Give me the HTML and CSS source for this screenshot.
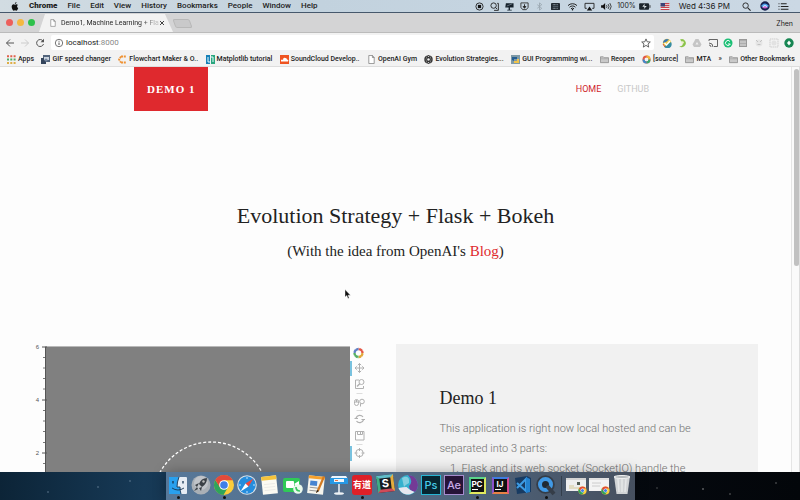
FILE: index.html
```html
<!DOCTYPE html>
<html lang="en">
<head>
<meta charset="utf-8">
<title>Demo1, Machine Learning + Flask</title>
<link rel="stylesheet" href="styles.css">
</head>
<body>
<svg class="defs" aria-hidden="true">
  <defs>
    <symbol id="chrome" viewBox="0 0 22 22">
      <circle cx="11" cy="11" r="10" fill="#fbcd3b"/>
      <path d="M11 11 2.3 6A10 10 0 0 1 19.7 6.3H11z" fill="#e24a3b"/>
      <path d="M2.3 6A10 10 0 0 0 10.5 21L15 13.3 11 11 7 13z" fill="#2fa55a"/>
      <path d="M2.3 6 7 13.5 11 11V6.3z" fill="#e24a3b"/>
      <circle cx="11" cy="11" r="4.8" fill="#fff"/><circle cx="11" cy="11" r="3.8" fill="#3f7fe8"/>
    </symbol>
    <symbol id="page" viewBox="0 0 8 10"><path d="M1 .5h4l2 2.2v6.8H1zM5 .5v2.3h2" fill="#fff" stroke="#777" stroke-width=".8"/></symbol>
    <symbol id="folder" viewBox="0 0 10 9"><path d="M.5 8V1.5h3.2l1 1h4.8V8z" fill="#c9c9c9" stroke="#858585" stroke-width=".8"/><path d="M.8 3.7h8.4" stroke="#999" stroke-width=".6"/></symbol>
  </defs>
</svg>

<header class="menubar">
  <nav class="menus">
    <svg class="apple" viewBox="0 0 8 10"><path d="M5.6 0C5.7 1 5 2 3.9 2.1 3.8 1.1 4.6.2 5.6 0zM7.2 3.2C5.8 4 6 6 7.6 6.6 7 8.300 6.200 9.600 5.500 9.600 4.900 9.600 4.700 9.200 4 9.200S3 9.600 2.500 9.600C1.600 9.600.3 7.300.3 5.400.3 3.600 1.300 2.600 2.400 2.600 3.100 2.600 3.600 3 4 3S5 2.500 5.800 2.500C6.400 2.500 6.900 2.800 7.200 3.200z" fill="#111"/></svg>
    <b>Chrome</b><span>File</span><span>Edit</span><span>View</span><span>History</span><span>Bookmarks</span><span>People</span><span>Window</span><span>Help</span>
  </nav>
  <div class="status">
    <svg class="st" viewBox="0 0 10 10"><circle cx="5" cy="5" r="4" fill="none" stroke="#222"/><rect x="3.200" y="3.200" width="3.600" height="3.600" fill="#111"/></svg>
    <svg class="st" viewBox="0 0 10 10"><g fill="none" stroke="#222"><circle cx="4" cy="4" r="3"/><path d="M6 6l2 2M8 1.500h1.300v7.800H4.500"/></g></svg>
    <svg class="st" viewBox="0 0 10 10"><path d="M1 1.500h8.500V6H.3zM4 6h1.500v2.500H4zM2.500 8.500h5v1h-5z" fill="#15202a"/><path d="M2 4.500 8 2" stroke="#8998a5" stroke-width=".7"/></svg>
    <svg class="st" viewBox="0 0 10 10"><path d="M1 1h8v5L7 8.500H3L1 6z" fill="none" stroke="#333"/><path d="M5 2.500v3M3.500 5h3L5 7z" stroke="#222" fill="#222"/></svg>
    <svg class="st" viewBox="0 0 10 10"><path d="M2.500 3l5 4L5 9V1l2.500 2-5 4" fill="none" stroke="#98a5af" stroke-width=".9"/></svg>
    <svg class="st wide" viewBox="0 0 10 10"><rect y="1" width="10" height="8" rx="1" fill="#222b33"/><path d="M2 3h6M2 7h6" stroke="#9eacb6" stroke-dasharray="1 .5"/><path d="M2 5h6" stroke="#52606b"/></svg>
    <svg class="st wide" viewBox="0 0 12 10"><path d="M1 4a7 7 0 0 1 10 0M2.700 5.800a4.600 4.600 0 0 1 6.600 0M4.300 7.500a2.500 2.500 0 0 1 3.400 0" fill="none" stroke="#222" stroke-width="1.100"/><circle cx="6" cy="8.600" r=".8"/></svg>
    <svg class="st wide" viewBox="0 0 12 10"><path d="M3 7H1V1.500h10V7H9" fill="none" stroke="#222"/><path d="M6 5l3 4.500H3z" fill="#111"/></svg>
    <svg class="st wide" viewBox="0 0 12 10"><path d="M0 3.500h2L4.500 1v8L2 6.500H0z" fill="#111"/><path d="M6 3.500q1 1.500 0 3M7.800 2.300q2 2.700 0 5.400M9.700 1.200q3 3.800 0 7.600" fill="none" stroke="#222" stroke-width=".9"/></svg>
    <span class="percent">100%</span>
    <svg class="battery" viewBox="0 0 14 10"><rect x=".5" y="1.500" width="11" height="7" rx="1" fill="#1b242c"/><path d="M12.500 3.500v3" stroke="#222"/><path d="M6.500 2 4 5.300h2.500L5.500 8 9 4.500H6.500z" fill="#dce4e9"/></svg>
    <svg class="flag" viewBox="0 0 10 8"><path fill="#eee" d="M0 0h10v8H0z"/><path d="M0 .7h10M0 3h10M0 5.200h10M0 7.400h10" stroke="#c9434d" stroke-width="1.200"/><path fill="#3b4477" d="M0 0h5v4H0z"/></svg>
    <span class="clock">Wed 4:36 PM</span>
    <svg class="st" viewBox="0 0 10 10"><path d="M6.500 6.500 9.500 9.500" stroke="#222" stroke-width="1.200"/><circle cx="4" cy="4" r="3" fill="none" stroke="#222"/></svg>
    <svg class="siri" viewBox="0 0 10 10"><circle cx="5" cy="5" r="4.700" fill="#17204d"/><path d="M1 5q4-5 8 0-4 3-8 0" fill="#4f9fec"/><path d="M2 6.500q3-3 6 0-3 2-6 0" fill="#ca63ce"/><path d="M3 5.500q2-2 4 0" stroke="#e5f8ff" fill="none"/></svg>
    <svg class="st" viewBox="0 0 11 10"><path d="M0 2h1M2.500 2H9M0 5h1M2.500 5H11M0 8h1M2.500 8H11" stroke="#222" stroke-width="1.200"/></svg>
  </div>
</header>

<main class="window">
  <div class="tabstrip">
    <div class="lights"><i class="red"></i><i class="yellow"></i><i class="green"></i></div>
    <div class="tab"><svg class="pageicon"><use href="#page"/></svg><span class="tabtitle">Demo1, Machine Learning + Fla</span><button class="close" aria-label="Close tab"><svg viewBox="0 0 6 6"><path d="M1 1l4 4M5 1 1 5" stroke="#444"/></svg></button></div>
    <button class="newtab" aria-label="New tab"></button>
    <span class="user">Zhen</span>
  </div>

  <div class="toolbar">
    <button aria-label="Back"><svg viewBox="0 0 10 10"><path d="M9 5H1.500M5 1.500 1.500 5 5 8.500" fill="none" stroke="#555"/></svg></button>
    <button aria-label="Forward"><svg viewBox="0 0 10 10"><path d="M1 5h7.500M5 1.500 8.500 5 5 8.500" fill="none" stroke="#ccc"/></svg></button>
    <button aria-label="Reload"><svg viewBox="0 0 10 10"><path d="M8 3A3.500 3.500 0 1 0 8.500 6" fill="none" stroke="#555"/><path d="M9 .8V4.300H5.500z" fill="#555"/></svg></button>
    <div class="address">
      <svg viewBox="0 0 10 10"><circle cx="5" cy="5" r="3.700" fill="none" stroke="#666" stroke-width=".9"/><path d="M5 4.500V7M5 2.800v.9" stroke="#555"/></svg>
      <a href="#">localhost<span>:8000</span></a>
      <svg class="star" viewBox="0 0 10 10"><path d="M5 .9 6.200 3.800 9.300 4 7 6 7.700 9.100 5 7.400 2.300 9.100 3 6 .7 4 3.800 3.800z" fill="none" stroke="#555" stroke-width=".9"/></svg>
    </div>
    <div class="extensions">
      <svg viewBox="0 0 10 10"><circle cx="5" cy="5" r="4.200" fill="#efce4a"/><path d="M1 5a4 4 0 0 1 6-3.500L4 4z" fill="#3a78b5"/><path d="M2 8.500A4 4 0 0 0 9 4L6 6z" fill="#368da3"/><path d="M2.500 5 4.500 7 8 3" fill="none" stroke="#fff" stroke-width="1.300"/><path d="M1 6l2 3" stroke="#d65840"/></svg>
      <svg viewBox="0 0 10 10"><path d="M3 1.500a4 4 0 1 1-1 6.500c3 1 5-2 3-4z" fill="#8bc34a"/><circle cx="5.500" cy="4.500" r="1.300" fill="#f0f0d0"/></svg>
      <svg viewBox="0 0 10 10"><path d="M3.500 1h3l3 5.500L8 9H2L.5 6.500z" fill="#c5c5c5"/><path d="M5 4 3.500 6.500h3z" fill="#eee"/></svg>
      <svg viewBox="0 0 10 10"><path d="M1 3V1.500h8.500v7H6M1 5a4 4 0 0 1 4 4M1 7a2 2 0 0 1 2 2" fill="none" stroke="#666"/></svg>
      <svg viewBox="0 0 10 10"><circle cx="5" cy="5" r="4.500" fill="#1bbf75"/><path d="M7 3.500a2.500 2.500 0 1 0 .3 2.500H5" fill="none" stroke="#fff"/></svg>
      <svg viewBox="0 0 10 10"><path d="M1 1h8v8H1z" fill="#999"/><path d="M3 2.500v3M5 2.500v3M7 2.500v3M2 7h6" stroke="#eee"/></svg>
      <svg viewBox="0 0 10 10"><circle cx="5" cy="5" r="3.500" fill="#e5e5e5"/><path d="M2 2l2 2M8 2 6 4M3.500 6.500h3" stroke="#c2c2c2"/></svg>
      <svg viewBox="0 0 10 10"><path d="M1 1h8v8H1z" fill="none" stroke="#cfcfcf" stroke-dasharray="1.500 .5"/><circle cx="5" cy="5" r="2.500" fill="#e2e2e2"/></svg>
      <svg viewBox="0 0 10 10"><circle cx="5" cy="5" r="4.700" fill="#178653"/><path d="M5 2.500 7 5 5 7.500 3 5z" fill="#fff"/></svg>
    </div>
  </div>

  <nav class="bookmarks">
    <a href="#"><svg viewBox="0 0 9 9"><g stroke-width="2" stroke-dasharray="2 1.300"><path d="M0 1.300h9" stroke="#df604b"/><path d="M0 4.600h9" stroke="#4cad67"/><path d="M0 7.900h9" stroke="#dfae45"/></g></svg>Apps</a>
    <a href="#"><svg viewBox="0 0 9 9"><path d="M2 0h7v7H2z" fill="#52647c"/><path d="M0 3h5v6H0z" fill="#34455c"/><path d="M3 2h5v3H3z" fill="#cbd4df"/><circle cx="5" cy="5" r="1.600" fill="#75859d"/></svg>GIF speed changer</a>
    <a href="#"><svg viewBox="0 0 9 9"><path d="M3 1.500 1 4.500l2 3M3 1.500h5M3 7.500h5" fill="none" stroke="#ef9233" stroke-dasharray="2 .8" stroke-width="1.800"/></svg>Flowchart Maker &amp; O..</a>
    <a href="#"><svg viewBox="0 0 9 9"><path fill="#1580b7" d="M0 0h4v9H0z"/><path fill="#29a67e" d="M5 0h4v9H5z"/><path d="M2 2v5h3M7 7V2H5" fill="none" stroke="#e9faff"/></svg>Matplotlib tutorial</a>
    <a href="#"><svg viewBox="0 0 9 9"><path fill="#ef5421" d="M0 0h9v9H0z"/><path d="M1 6.500V5q1-1 2 0 0-3 2.500-2Q7 3 7 4.500q2 0 1 2z" fill="#fff"/></svg>SoundCloud Develop..</a>
    <a href="#"><svg><use href="#page"/></svg>OpenAI Gym</a>
    <a href="#"><svg viewBox="0 0 9 9"><g fill="none" stroke="#222" stroke-width=".8"><circle cx="4.500" cy="4.500" r="3.900"/><ellipse cx="4.500" cy="4.500" rx="1.700" ry="3.800"/><ellipse cx="4.500" cy="4.500" rx="1.700" ry="3.800" transform="rotate(60 4.500 4.500)"/><ellipse cx="4.500" cy="4.500" rx="1.700" ry="3.800" transform="rotate(120 4.500 4.500)"/></g></svg>Evolution Strategies...</a>
    <a href="#"><svg viewBox="0 0 9 9"><path fill="#7e9aa7" d="M0 0h9v9H0z"/><path d="M1 5V2h5v2H3v2z" fill="#265e91"/><path d="M3 8V6h3V4h2v4z" fill="#efc34b"/></svg>GUI Programming wi...</a>
    <a href="#"><svg><use href="#folder"/></svg>Reopen</a>
    <a href="#"><svg viewBox="0 0 9 9"><circle cx="4.500" cy="4.500" r="3" fill="none" stroke="#e15746" stroke-width="2"/><path d="M4.500 1.500a3 3 0 0 1 3 3" fill="none" stroke="#efb83b" stroke-width="2"/><path d="M7.500 4.500a3 3 0 0 1-3 3" fill="none" stroke="#36aa70" stroke-width="2"/><path d="M4.500 7.500a3 3 0 0 1-3-3" fill="none" stroke="#408bcc" stroke-width="2"/></svg>[source]</a>
    <a href="#"><svg><use href="#folder"/></svg>MTA</a>
    <a href="#">»</a>
    <a href="#"><svg><use href="#folder"/></svg>Other Bookmarks</a>
  </nav>

  <div class="viewport">
    <div class="page">
      <header class="siteheader">
        <a class="brand" href="#">DEMO 1</a>
        <nav class="sitenav"><a class="active" href="#">HOME</a><a href="#">GITHUB</a></nav>
      </header>
      <section class="hero">
        <h1>Evolution Strategy + Flask + Bokeh</h1>
        <p>(With the idea from OpenAI's <a href="#">Blog</a>)</p>
      </section>
      <section class="content">
        <div class="figure">
          <svg class="plot" viewBox="0 0 317 160">
            <path d="M12 3h305v157H12z" fill="#808080"/>
            <path d="M12 2.500h305" stroke="#b9b9b9"/>
            <path d="M12.500 3v157" stroke="#555"/>
            <path d="M9 3h5M9 56h5M9 109h5" stroke="#555"/>
            <path d="M10 13.500h3M10 24h3M10 34.500h3M10 45h3M10 66.500h3M10 77h3M10 87.500h3M10 98.500h3M10 119.500h3" stroke="#555" stroke-width=".8"/>
            <circle cx="178" cy="156" r="58" fill="none" stroke="#fff" stroke-width="1.300" stroke-dasharray="3 2"/>
            <g class="ticks"><text x="6" y="5">6</text><text x="6" y="58">4</text><text x="6" y="111">2</text></g>
          </svg>
          <svg class="plottools" viewBox="0 0 18 120">
            <g fill="none" stroke-width="2.400"><path d="M8.500 5a4 4 0 0 1 4 4" stroke="#e45745"/><path d="M12.500 9a4 4 0 0 1-4 4" stroke="#e1a739"/><path d="M8.500 13a4 4 0 0 1-4-4" stroke="#56af65"/><path d="M4.500 9a4 4 0 0 1 4-4" stroke="#5f80c5"/><circle cx="8.500" cy="9" r="5" stroke="#fff" stroke-width=".6" stroke-dasharray="1 2.900"/></g>
            <path d="M0 17h2v15H0zM0 102h2v15H0z" fill="#79c2df"/>
            <g fill="none" stroke="#b0b0b0"><path d="M5 24h9M9.500 19.500v9M7.800 21.200l1.700-1.700 1.700 1.700M7.800 26.800l1.700 1.700 1.700-1.700M6.700 22.300 5 24l1.700 1.700M12.300 22.300 14 24l-1.700 1.700"/>
            <path d="M9 36H5.500v8.500h8V42"/><circle cx="11.500" cy="38" r="2.500"/><path d="M9.700 39.800 7 42.500" stroke-width="1.500"/>
            <rect x="4.500" y="55.500" width="4" height="6" rx="2"/><path d="M4.500 58h4M6.500 56v2"/><circle cx="12" cy="57.500" r="2.300"/><path d="M10.500 59.500v3"/>
            <path d="M6 74a4 4 0 0 1 7-1M13.500 76a4 4 0 0 1-7 1M4.500 74.500h3.500M11.500 75.500H15" stroke-width="1.200"/>
            <path d="M5.500 87.500h8.500v8.500H5.500zM7.500 87.500v3h5v-3M10.500 88v2"/>
            <circle cx="9.500" cy="109" r="3.700"/><path d="M9.500 104v3M9.500 111v3M4.500 109h3M11.500 109h3"/></g>
            <path d="M6.500 49.500h6M6.500 66.500h6M6.500 100.500h6" stroke="#ddd"/>
          </svg>
        </div>
        <article class="card">
          <h2>Demo 1</h2>
          <p>This application is right now local hosted and can be separated into 3 parts:</p>
          <ol><li>Flask and its web socket (SocketIO) handle the</li></ol>
        </article>
      </section>
    </div>
    <div class="scrollbar"><div class="thumb"></div></div>
    <svg class="cursor" viewBox="0 0 7 10"><path d="M1 .5v7.500l1.800-1.500 1.200 3 1.200-.5-1.200-2.800h2.500z" fill="#111" stroke="#fff" stroke-width=".4"/></svg>
  </div>
</main>

<footer class="desktop">
  <nav class="dock">
    <a class="running" href="#" aria-label="Finder"><svg viewBox="0 0 22 22"><rect x="2" y="3" width="18" height="17" rx="1" fill="#e6ecf3"/><path d="M2 3h10q-2 5-2 10h3q0 4 1 7H2z" fill="#29a0ee"/><path d="M6 7v2.500M16 7v2.500" stroke="#173653" stroke-width="1.300"/><path d="M5 14q6 4 12 0M12 3q-2 5-2 10h3q0 4 1 7" fill="none" stroke="#173653" stroke-width=".9"/></svg></a>
    <a href="#" aria-label="Launchpad"><svg viewBox="0 0 22 22"><circle cx="11" cy="11" r="9.500" fill="#aab0b6"/><circle cx="11" cy="9" r="7" fill="#c0c4c9"/><path d="M17 4q-6 0-8 6l3 3q5-3 5-9M9 9 5 11l2 2M12 13l-1 4-2-3M7 13l-3 4 4-2" fill="#3a4046"/><circle cx="13.500" cy="7.500" r="1.200" fill="#bbb"/></svg></a>
    <a class="running" href="#" aria-label="Chrome"><svg><use href="#chrome"/></svg></a>
    <a href="#" aria-label="Safari"><svg viewBox="0 0 22 22"><circle cx="11" cy="11" r="9.800" fill="#d9e0e6"/><circle cx="11" cy="11" r="8.700" fill="#258ddd"/><path d="M17.500 4.500 12.500 12.500 9.500 9.500z" fill="#f1473d"/><path d="M4.500 17.500 9.500 9.500 12.500 12.500z" fill="#fff"/><path d="M11 3v2M11 17v2M3 11h2M17 11h2" stroke="#bde2ff"/></svg></a>
    <a href="#" aria-label="Notes"><svg viewBox="0 0 22 22"><g transform="rotate(-6 11 11)"><path fill="#fafaf3" d="M3 2h15v18H3z"/><path fill="#f5c33c" d="M3 2h15v4H3z"/><path d="M5 10h11M5 13h11M5 16h11" stroke="#ddd" stroke-width=".5"/></g></svg></a>
    <a href="#" aria-label="FaceTime"><svg viewBox="0 0 22 22"><rect x="1" y="4" width="17" height="14" rx="2" fill="#30c957"/><rect x="4" y="7" width="8" height="7" rx="1" fill="#fff"/><path d="M12 10 17 7v7z" fill="#fff"/><circle cx="16" cy="15" r="4.800" fill="#eaf8ec"/><path d="M14 13q0 4 4 4" stroke="#3cc361" stroke-width="1.700" fill="none"/></svg></a>
    <a href="#" aria-label="Pages"><svg viewBox="0 0 22 22"><g transform="rotate(6 11 11)"><path fill="#f5f4ed" d="M3 2h16v18H3z"/><path fill="#f6a12d" d="M3 2h16v3H3z"/><path fill="#4684d1" d="M5 7h7v5H5z"/><path d="M5 14h9M5 17h7" stroke="#999"/></g><path d="M18 2 12 16l-1 3 3-2 6-14z" fill="#d27a22"/><path d="m12 16-1 3 3-2" fill="#222"/></svg></a>
    <a href="#" aria-label="Keynote"><svg viewBox="0 0 22 22"><path d="M4 2h14l2 3H2z" fill="#edf5fd"/><path d="M2 4h18v6H2z" fill="#2698e5"/><path d="M11 10v9" stroke="#e5edf4" stroke-width="1.600"/><ellipse cx="11" cy="19.500" rx="5" ry="1.300" fill="#eef2f5"/><path d="M6 5h10v3H6z" fill="#eef5fb"/><path d="M7 6.500h3" stroke="#ef7541"/></svg></a>
    <a class="running" href="#" aria-label="Youdao"><span class="app youdao">有道</span></a>
    <a href="#" aria-label="Slack"><span class="app slack">S</span></a>
    <a href="#" aria-label="Swirl"><svg viewBox="0 0 22 22"><circle cx="11" cy="11" r="10" fill="#35b1ce"/><path d="M11 1a10 10 0 0 1 7 17q-6-1-6-6 5-5-1-11" fill="#743b96"/><path d="M1.500 14q5-1 8-1 4 4 8 5A10 10 0 0 1 1.500 14" fill="#e6e7ef"/><path d="M5 4q8-4 7 5-4 2-5 4" fill="#85cfdf"/></svg></a>
    <a href="#" aria-label="Photoshop"><span class="app ps">Ps</span></a>
    <a href="#" aria-label="After Effects"><span class="app ae">Ae</span></a>
    <a class="running" href="#" aria-label="PyCharm"><span class="app pc">PC</span></a>
    <a href="#" aria-label="IntelliJ IDEA"><span class="app ij">IJ</span></a>
    <a href="#" aria-label="Visual Studio Code"><svg viewBox="0 0 22 22"><path d="M3 4 15 2l4 2v14l-14 2z" fill="#183b62"/><path d="m5 9 9 8V5L5 14" fill="none" stroke="#3c9be4" stroke-width="2"/><path d="m14 3 4 2v13l-4 1z" fill="#2482cf"/></svg></a>
    <a class="running" href="#" aria-label="QuickTime"><svg viewBox="0 0 22 22"><circle cx="10.500" cy="10.500" r="9.300" fill="#353d48"/><circle cx="10.500" cy="10.500" r="5.500" fill="#202933" stroke="#4199e5" stroke-width="4"/><path d="m12 12 7 8" stroke="#353d48" stroke-width="4"/></svg></a>
    <span class="divider"></span>
    <a href="#" aria-label="Minimised window"><svg viewBox="0 0 22 22"><path fill="#eee" d="M1 4h20v13H1z"/><path d="M1 5h20" stroke="#bbb"/><path d="M4 12h5M4 14h12" stroke="#d3c998"/><path fill="#535d54" d="M12 8h3v3h-3z"/><use href="#chrome" x="13" y="12" width="9" height="9"/></svg></a>
    <a href="#" aria-label="Minimised window"><svg viewBox="0 0 22 22"><path fill="#f3f3f3" d="M1 4h20v13H1z"/><path d="M1 5h20M4 9h9M4 12h8" stroke="#ccc"/><use href="#chrome" x="13" y="12" width="9" height="9"/></svg></a>
    <a href="#" aria-label="Trash"><svg viewBox="0 0 22 22"><path d="M3 2h16l-2.500 18H5.500z" fill="#d1d4d6"/><path d="M7 5l1 13M11 5v13M15 5l-1 13" stroke="#e5e7e8" stroke-width="1.500"/><ellipse cx="11" cy="3" rx="8" ry="1.500" fill="#b5babd" stroke="#f0f1f1"/></svg></a>
  </nav>
</footer>
</body>
</html>
```
FILE: styles.css
```css
* { box-sizing: border-box; }
body {
  margin: 0;
  height: 100vh;
  display: flex;
  flex-direction: column;
  overflow: hidden;
  background: #18354d;
  font-family: Inter, "Liberation Sans", sans-serif;
  color: #222;
}
a { color: inherit; text-decoration: none; }
button { border: 0; padding: 0; background: none; font: inherit; color: inherit; }
svg { display: block; flex: none; }
.defs { position: absolute; width: 0; height: 0; }

.menubar {
  flex: none;
  height: 13px;
  display: flex;
  align-items: center;
  justify-content: space-between;
  padding: 0 9px 0 11px;
  background: linear-gradient(90deg, #d2dce2, #c2d2de 40%, #cbd8e4);
  border-bottom: 1px solid #46586c;
  font-size: 8px;
  line-height: 12px;
  white-space: nowrap;
}
.menus { display: flex; gap: 10px; align-items: center; font-family: Roboto, sans-serif; font-weight: 500; }
.menus b { font-weight: 900; }
.apple { width: 8px; height: 9px; }
.status { display: flex; align-items: center; }
.st { width: 15px; height: 9px; }
.wide { width: 17px; height: 9px; }
.percent { margin-left: 2px; font-size: 7px; }
.battery { width: 14px; height: 9px; margin: 0 8px 0 2px; }
.flag { width: 10px; height: 7px; margin-right: 9px; }
.clock { margin-right: 9px; }
.siri { width: 10px; height: 10px; margin: 0 6px; }

.window {
  flex: 1;
  min-height: 0;
  display: flex;
  flex-direction: column;
  background: #f2f2f2;
  border-radius: 3px 3px 0 0;
}
.tabstrip {
  flex: none;
  height: 20px;
  display: flex;
  align-items: flex-end;
  background: #d4d4d5;
  border-bottom: 1px solid #bbb;
}
.lights { display: flex; gap: 4px; padding: 0 4px 6px 6px; }
.lights i { width: 7px; height: 7px; border-radius: 50%; }
.red { background: #ed5f5b; }
.yellow { background: #f4b840; }
.green { background: #2ec14b; }
.tab {
  width: 134px;
  height: 18px;
  display: flex;
  align-items: center;
  padding: 0 10px 0 11px;
  background: #f2f2f2;
  clip-path: polygon(6px 0, 126px 0, 100% 100%, 0 100%);
  font-family: Roboto, sans-serif;
  font-size: 7px;
}
.pageicon { width: 6px; height: 8px; margin-right: 5px; }
.tabtitle {
  flex: 1;
  white-space: nowrap;
  background: linear-gradient(90deg, #222 80%, #ccc);
  background-clip: text;
  color: transparent;
}
.close svg { width: 6px; height: 6px; }
.newtab {
  width: 17px;
  height: 9px;
  margin: 0 0 4px 1px;
  background: #c9c9ca;
  border: 1px solid #b8b8b8;
  border-radius: 2px;
  transform: skewX(20deg);
}
.user { margin: 0 7px 4px auto; font-size: 7px; }

.toolbar { flex: none; height: 19px; display: flex; align-items: center; padding: 0 3px 0 5px; }
.toolbar button { width: 10px; height: 10px; margin-right: 5px; }
.toolbar button svg { width: 10px; height: 10px; }
.address {
  flex: 1;
  height: 15px;
  display: flex;
  align-items: center;
  gap: 2px;
  padding: 0 3px;
  margin-left: 1px;
  background: #fff;
  border-radius: 2px;
  font-size: 8px;
}
.address a { font-family: Roboto, sans-serif; }
.address span { color: #888; }
.address svg { width: 10px; height: 10px; }
.star { margin-left: auto; }
.extensions { width: 138px; margin-left: 5px; display: grid; grid-template-columns: repeat(9, 1fr); justify-items: center; }
.extensions svg { width: 10px; height: 10px; }
.bookmarks {
  flex: none;
  height: 15px;
  display: flex;
  justify-content: space-between;
  align-items: center;
  padding: 0 5px 0 7px;
  border-bottom: 1px solid #ddd;
  font-family: Roboto, sans-serif;
  font-size: 7px;
  font-weight: 500;
  white-space: nowrap;
}
.bookmarks a { display: flex; align-items: center; gap: 2px; }
.bookmarks svg { width: 9px; height: 9px; }

.viewport { flex: 1; min-height: 0; display: flex; position: relative; background: #fdfdfd; overflow: hidden; }
.page { flex: 1; font-family: Roboto, sans-serif; }
.scrollbar { width: 9px; padding: 2px 2px 0; background: #fafafa; border-left: 1px solid #e5e5e5; border-right: 1px solid #ddd; }
.thumb { width: 5px; height: 49%; background: #c1c1c1; border-radius: 3px; }
.cursor { position: absolute; left: 43%; top: 222px; width: 7px; height: 10px; }
.siteheader { display: flex; justify-content: space-between; align-items: center; margin: 0 142px 0 134px; }
.brand {
  padding: 0 13px;
  background: #df292e;
  color: #fff;
  font-family: "Roboto Slab", "Liberation Serif", serif;
  font-size: 11px;
  font-weight: 700;
  line-height: 44px;
  letter-spacing: 1px;
}
.sitenav { display: flex; gap: 16px; font-size: 9px; color: #c8c8c8; }
.sitenav .active { color: #d0272d; }
.hero { text-align: center; padding-top: 91px; font-family: "Roboto Slab", "Liberation Serif", serif; font-weight: 300; }
h1 { margin: 0; font-size: 22px; line-height: 28px; font-weight: 300; color: #222; }
.hero p { margin: 11px 0 0; font-size: 15px; line-height: 20px; }
.hero a { color: #df292e; }
.content { display: grid; grid-template-columns: 1fr 1fr; margin: 83px 33px 0; }
.figure { display: flex; align-items: flex-start; }
.plot { width: 317px; height: 160px; }
.plottools { width: 18px; height: 120px; }
.ticks { font-family: "Liberation Sans", sans-serif; font-size: 6px; fill: #555; text-anchor: end; }
.card { padding: 42px 44px; background: #f1f1f1; color: #707070; font-size: 11px; line-height: 20px; font-weight: 300; }
h2 { margin: 0 0 8px; font-family: "Roboto Slab", "Liberation Serif", serif; font-size: 18px; line-height: 25px; font-weight: 300; color: #222; }
.card p, .card ol { margin: 0; }
.card ol { padding-left: 22px; }

.desktop {
  flex: none;
  height: 28px;
  position: relative;
  display: flex;
  justify-content: center;
  background:
    radial-gradient(circle at 48px 20px, #8aa3b8 0, transparent 1px),
    radial-gradient(circle at 98px 15px, #8aa3b8 0, transparent 1px),
    radial-gradient(circle at 130px 9px, #8aa3b8 0, transparent 1px),
    radial-gradient(circle at 703px 17px, #ddd 0, transparent 1px),
    radial-gradient(circle at 730px 22px, #999 0, transparent 1px),
    radial-gradient(circle at 776px 11px, #999 0, transparent 1px),
    radial-gradient(circle at 657px 16px, #777 0, transparent 1px),
    linear-gradient(90deg, #0c2437, #173a57 18%, #05090f 78%, #03060a);
}
.dock {
  display: flex;
  align-items: flex-start;
  padding: 2px 1px 0;
  background: linear-gradient(90deg, #577899, #536d89 45%, #46505f);
  box-shadow: 0 0 14px rgba(0, 0, 0, .3);
}
.dock a { width: 23px; height: 26px; position: relative; display: flex; justify-content: center; }
.dock a > svg { width: 22px; height: 22px; }
.running::after { content: ""; position: absolute; bottom: 1px; left: 10px; width: 3px; height: 3px; border-radius: 50%; background: #111; }
.divider { width: 1px; height: 20px; margin: 2px 3px; background: #333e4b; }
.app { width: 20px; height: 20px; margin-top: 1px; text-align: center; font-size: 11px; font-weight: 500; line-height: 18px; }
.youdao { background: #dd2028; border-radius: 3px; color: #fff; font: bold 9px/20px "Noto Sans CJK SC", sans-serif; }
.slack { width: 17px; height: 17px; border: 3px solid; border-color: #60bcc9 #e5ac3e #d04a58 #40ac84; background: #181d21; color: #fff; font-weight: 700; line-height: 11px; transform: rotate(-7deg); }
.ps { background: #072531; border: 1px solid #26b5d3; color: #48cce9; }
.ae { background: #261337; border: 1px solid #a68bce; color: #c6a9e6; }
.pc, .ij { width: 17px; height: 17px; margin-top: 3px; border: 2px solid; background: #111; color: #fff; font-size: 8px; font-weight: 700; line-height: 10px; }
.pc { border-color: #5bd58b #d9e45b #e4ea5e #43c889; }
.ij { border-color: #3d7ce2 #d84893 #e98145 #8b51cb; }
.pc::after, .ij::after { content: ""; display: block; width: 6px; height: 1px; margin-left: 1px; background: #fff; }
```
